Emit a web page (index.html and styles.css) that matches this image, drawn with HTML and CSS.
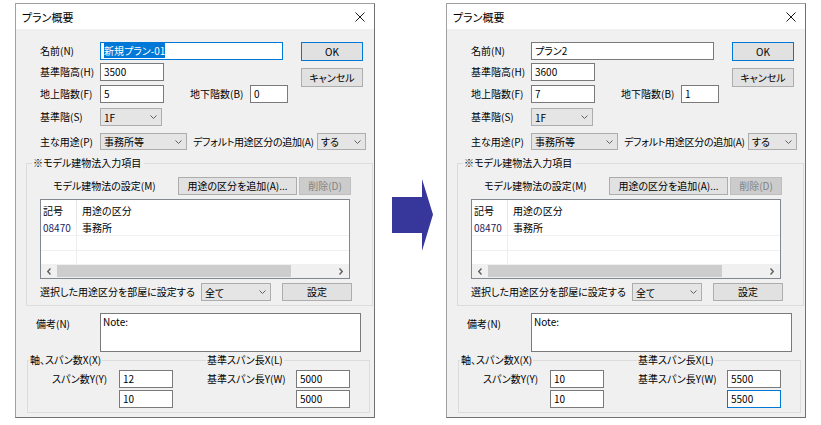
FILE: index.html
```html
<!DOCTYPE html>
<html lang="ja">
  <head>
    <meta charset="UTF-8" />
    <title>プラン概要</title>
    <link rel="stylesheet" href="styles.css">
  </head>
  <body>
    <div class="page">
      <!-- 変更前 -->
      <div class="dialog">
        <div class="titlebar">
          <span class="title">プラン概要</span>
          <svg class="close" width="10" height="10" viewBox="0 0 10 10"><path d="M0.5 0.5 L9.5 9.5 M9.5 0.5 L0.5 9.5" stroke="#1a1a1a" stroke-width="1" fill="none"/></svg>
        </div>
        <div class="body">
          <div class="top">
            <div class="form">
              <div class="row">
                <span class="label">名前(N)</span>
                <div class="field w-name focus"><span class="sel">新規プラン-01</span></div>
              </div>
              <div class="row">
                <span class="label">基準階高(H)</span>
                <div class="field w-num">3500</div>
              </div>
              <div class="row">
                <span class="label">地上階数(F)</span>
                <div class="field w-num">5</div>
                <span class="label label-b">地下階数(B)</span>
                <div class="field w-b">0</div>
              </div>
              <div class="row">
                <span class="label">基準階(S)</span>
                <div class="combo w-floor"><span>1F</span><svg class="chev" width="7" height="4" viewBox="0 0 7 4"><path d="M0.5 0.5 L3.5 3.5 L6.5 0.5" fill="none" stroke="#606060"/></svg></div>
              </div>
            </div>
            <div class="actions">
              <button type="button" class="btn default">OK</button>
              <button type="button" class="btn">キャンセル</button>
            </div>
          </div>

          <div class="row row-use">
            <span class="label">主な用途(P)</span>
            <div class="combo w-use"><span>事務所等</span><svg class="chev" width="7" height="4" viewBox="0 0 7 4"><path d="M0.5 0.5 L3.5 3.5 L6.5 0.5" fill="none" stroke="#606060"/></svg></div>
            <span class="label label-def">デフォルト用途区分の追加(A)</span>
            <div class="combo w-def"><span>する</span><svg class="chev" width="7" height="4" viewBox="0 0 7 4"><path d="M0.5 0.5 L3.5 3.5 L6.5 0.5" fill="none" stroke="#606060"/></svg></div>
          </div>

          <div class="group group-model">
            <div class="legend">※モデル建物法入力項目</div>
            <div class="model-row">
              <span class="label label-model">モデル建物法の設定(M)</span>
              <button type="button" class="btn btn-add">用途の区分を追加(A)...</button>
              <button type="button" class="btn btn-del" disabled>削除(D)</button>
            </div>
            <div class="list">
              <div class="list-head"><span class="c1">記号</span><span class="c2">用途の区分</span></div>
              <div class="list-row"><span class="c1 code">08470</span><span class="c2">事務所</span></div>
              <div class="list-row"><span class="c1"></span><span class="c2"></span></div>
              <div class="list-row last"><span class="c1"></span><span class="c2"></span></div>
              <div class="hscroll">
                <div class="sb-arrow"><svg width="4" height="7" viewBox="0 0 4 7"><path d="M3.5 0.5 L0.8 3.5 L3.5 6.5" fill="none" stroke="#606060" stroke-width="1.4"/></svg></div>
                <div class="sb-track"><div class="sb-thumb"></div></div>
                <div class="sb-arrow"><svg width="4" height="7" viewBox="0 0 4 7"><path d="M0.5 0.5 L3.2 3.5 L0.5 6.5" fill="none" stroke="#606060" stroke-width="1.4"/></svg></div>
              </div>
            </div>
            <div class="apply-row">
              <span class="label label-apply">選択した用途区分を部屋に設定する</span>
              <div class="combo w-all"><span>全て</span><svg class="chev" width="7" height="4" viewBox="0 0 7 4"><path d="M0.5 0.5 L3.5 3.5 L6.5 0.5" fill="none" stroke="#606060"/></svg></div>
              <button type="button" class="btn btn-set">設定</button>
            </div>
          </div>

          <div class="note-row">
            <span class="label label-note">備考(N)</span>
            <div class="note">Note:</div>
          </div>

          <div class="group group-span">
            <div class="span-head">
              <span class="tag tag-x">軸、スパン数X(X)</span>
              <span class="tag">基準スパン長X(L)</span>
            </div>
            <div class="span-grid">
              <span class="label g-l1">スパン数Y(Y)</span>
              <div class="field g-f1">12</div>
              <span class="label g-l2">基準スパン長Y(W)</span>
              <div class="field g-f2">5000</div>
              <div class="field g-f1">10</div>
              <div class="field g-f2">5000</div>
            </div>
          </div>
        </div>
      </div>

      <div class="gap">
        <svg class="arrow" width="43" height="73" viewBox="0 0 43 73"><polygon points="1,18 31,18 31,0 42,35.5 31,72 31,54 1,54" fill="#36369b"/></svg>
      </div>

      <!-- 変更後 -->
      <div class="dialog">
        <div class="titlebar">
          <span class="title">プラン概要</span>
          <svg class="close" width="10" height="10" viewBox="0 0 10 10"><path d="M0.5 0.5 L9.5 9.5 M9.5 0.5 L0.5 9.5" stroke="#1a1a1a" stroke-width="1" fill="none"/></svg>
        </div>
        <div class="body">
          <div class="top">
            <div class="form">
              <div class="row">
                <span class="label">名前(N)</span>
                <div class="field w-name">プラン2</div>
              </div>
              <div class="row">
                <span class="label">基準階高(H)</span>
                <div class="field w-num">3600</div>
              </div>
              <div class="row">
                <span class="label">地上階数(F)</span>
                <div class="field w-num">7</div>
                <span class="label label-b">地下階数(B)</span>
                <div class="field w-b">1</div>
              </div>
              <div class="row">
                <span class="label">基準階(S)</span>
                <div class="combo w-floor"><span>1F</span><svg class="chev" width="7" height="4" viewBox="0 0 7 4"><path d="M0.5 0.5 L3.5 3.5 L6.5 0.5" fill="none" stroke="#606060"/></svg></div>
              </div>
            </div>
            <div class="actions">
              <button type="button" class="btn default">OK</button>
              <button type="button" class="btn">キャンセル</button>
            </div>
          </div>

          <div class="row row-use">
            <span class="label">主な用途(P)</span>
            <div class="combo w-use"><span>事務所等</span><svg class="chev" width="7" height="4" viewBox="0 0 7 4"><path d="M0.5 0.5 L3.5 3.5 L6.5 0.5" fill="none" stroke="#606060"/></svg></div>
            <span class="label label-def">デフォルト用途区分の追加(A)</span>
            <div class="combo w-def"><span>する</span><svg class="chev" width="7" height="4" viewBox="0 0 7 4"><path d="M0.5 0.5 L3.5 3.5 L6.5 0.5" fill="none" stroke="#606060"/></svg></div>
          </div>

          <div class="group group-model">
            <div class="legend">※モデル建物法入力項目</div>
            <div class="model-row">
              <span class="label label-model">モデル建物法の設定(M)</span>
              <button type="button" class="btn btn-add">用途の区分を追加(A)...</button>
              <button type="button" class="btn btn-del" disabled>削除(D)</button>
            </div>
            <div class="list">
              <div class="list-head"><span class="c1">記号</span><span class="c2">用途の区分</span></div>
              <div class="list-row"><span class="c1 code">08470</span><span class="c2">事務所</span></div>
              <div class="list-row"><span class="c1"></span><span class="c2"></span></div>
              <div class="list-row last"><span class="c1"></span><span class="c2"></span></div>
              <div class="hscroll">
                <div class="sb-arrow"><svg width="4" height="7" viewBox="0 0 4 7"><path d="M3.5 0.5 L0.8 3.5 L3.5 6.5" fill="none" stroke="#606060" stroke-width="1.4"/></svg></div>
                <div class="sb-track"><div class="sb-thumb"></div></div>
                <div class="sb-arrow"><svg width="4" height="7" viewBox="0 0 4 7"><path d="M0.5 0.5 L3.2 3.5 L0.5 6.5" fill="none" stroke="#606060" stroke-width="1.4"/></svg></div>
              </div>
            </div>
            <div class="apply-row">
              <span class="label label-apply">選択した用途区分を部屋に設定する</span>
              <div class="combo w-all"><span>全て</span><svg class="chev" width="7" height="4" viewBox="0 0 7 4"><path d="M0.5 0.5 L3.5 3.5 L6.5 0.5" fill="none" stroke="#606060"/></svg></div>
              <button type="button" class="btn btn-set">設定</button>
            </div>
          </div>

          <div class="note-row">
            <span class="label label-note">備考(N)</span>
            <div class="note">Note:</div>
          </div>

          <div class="group group-span">
            <div class="span-head">
              <span class="tag tag-x">軸、スパン数X(X)</span>
              <span class="tag">基準スパン長X(L)</span>
            </div>
            <div class="span-grid">
              <span class="label g-l1">スパン数Y(Y)</span>
              <div class="field g-f1">10</div>
              <span class="label g-l2">基準スパン長Y(W)</span>
              <div class="field g-f2">5500</div>
              <div class="field g-f1">10</div>
              <div class="field g-f2 focus">5500</div>
            </div>
          </div>
        </div>
      </div>
    </div>
  </body>
</html>
```

FILE: styles.css
```css
body {
  margin: 0;
  background: #ffffff;
  font-family: "Noto Sans CJK JP", sans-serif;
  font-size: 10px;
  font-feature-settings: "palt";
  color: #000000;
}
.page {
  display: flex;
  align-items: flex-start;
  padding: 3px 0 0 15px;
}
.dialog {
  width: 360px;
  height: 415px;
  flex: none;
  box-sizing: border-box;
  border: 1px solid #a0a0a0;
  border-right-color: #707070;
  border-bottom-color: #707070;
  background: #f0f0f0;
}
.titlebar {
  height: 25px;
  background: #ffffff;
  display: flex;
  align-items: center;
  justify-content: space-between;
  padding: 0 9px 0 6px;
}
.title {
  font-size: 11px;
}
.close {
  display: block;
}
.body {
  padding: 13px 1px 0 10px;
}

/* 上部フォーム */
.top {
  display: flex;
  height: 91px;
  padding-left: 14px;
}
.form {
  width: 261px;
  display: grid;
  grid-template-rows: 21px 22px 23px 25px;
}
.row {
  display: flex;
  align-items: flex-start;
}
.label {
  flex: none;
  width: 60px;
  line-height: 18px;
  white-space: nowrap;
}
.field {
  flex: none;
  box-sizing: border-box;
  height: 18px;
  border: 1px solid #7a7a7a;
  background: #ffffff;
  padding-left: 3px;
  line-height: 16px;
  white-space: nowrap;
  overflow: hidden;
}
.field.focus {
  border-color: #0078d7;
}
.sel {
  background: #0078d7;
  color: #ffffff;
}
.w-name {
  width: 183px;
}
.w-num {
  width: 64px;
}
.w-b {
  width: 38px;
}
.label-b {
  margin-left: 26px;
}
.combo {
  flex: none;
  box-sizing: border-box;
  height: 18px;
  border: 1px solid #adadad;
  background: #e5e5e5;
  display: flex;
  align-items: center;
  justify-content: space-between;
  padding: 0 4px 0 3px;
  white-space: nowrap;
}
.chev {
  display: block;
}
.w-floor {
  width: 62px;
}
.w-use {
  width: 87px;
}
.w-def {
  width: 49px;
}
.w-all {
  width: 70px;
}

.btn {
  flex: none;
  box-sizing: border-box;
  height: 19px;
  margin: 0;
  padding: 0;
  border: 1px solid #adadad;
  border-radius: 0;
  background: #e1e1e1;
  color: #000000;
  font-family: inherit;
  font-size: inherit;
  font-feature-settings: inherit;
  line-height: 17px;
  text-align: center;
  white-space: nowrap;
}
.btn.default {
  border-color: #0078d7;
}
.btn:disabled {
  background: #cccccc;
  border-color: #bfbfbf;
  color: #838383;
}
.actions {
  display: flex;
  flex-direction: column;
  gap: 7px;
}
.actions .btn {
  width: 62px;
}

.row-use {
  height: 17px;
  padding-left: 14px;
}
.row-use .label {
  line-height: 17px;
}
.row-use .combo {
  height: 17px;
}
.label-def {
  width: 124px;
  margin-left: 6px;
  letter-spacing: -0.3px;
}

/* グループボックス */
.group {
  border: 1px solid #dcdcdc;
}
.group-model {
  margin-top: 13px;
  padding-bottom: 4px;
}
.legend {
  width: fit-content;
  height: 14px;
  margin: -8px 0 0 5px;
  padding: 0 3px 0 1px;
  background: #f0f0f0;
  line-height: 14px;
  white-space: nowrap;
}
.model-row {
  display: flex;
  margin-top: 7px;
  padding-left: 26px;
}
.label-model {
  width: 125px;
}
.model-row .btn {
  height: 18px;
  line-height: 16px;
}
.btn-add {
  width: 119px;
}
.btn-del {
  width: 52px;
  margin-left: 2px;
}

.list {
  box-sizing: border-box;
  width: 310px;
  height: 80px;
  margin: 4px 0 0 13px;
  border: 1px solid #828790;
  background: #ffffff;
}
.list-head,
.list-row {
  display: flex;
}
.list-head {
  height: 21px;
  line-height: 21px;
}
.list-row {
  height: 14px;
  line-height: 14px;
  border-bottom: 1px solid #f0f0f0;
}
.list-row.last {
  height: 13px;
  border-bottom: none;
}
.c1 {
  box-sizing: border-box;
  width: 36px;
  padding-left: 2px;
  border-right: 1px solid #ededed;
}
.list-head .c1 {
  border-right-color: #e5e5e5;
}
.c2 {
  padding-left: 5px;
}
.code {
  color: #1c1c5a;
}
.hscroll {
  display: flex;
  height: 14px;
  background: #f0f0f0;
}
.sb-arrow {
  width: 16px;
  display: flex;
  align-items: center;
  justify-content: center;
}
.sb-track {
  flex: 1;
  display: flex;
  padding: 1px 0;
}
.sb-thumb {
  width: 234px;
  background: #cdcdcd;
}

.apply-row {
  display: flex;
  margin-top: 4px;
  padding-left: 13px;
}
.label-apply {
  width: 161px;
}
.btn-set {
  width: 70px;
  height: 18px;
  margin-left: 11px;
  line-height: 16px;
}

.note-row {
  display: flex;
  margin-top: 7px;
  padding-left: 10px;
}
.label-note {
  width: 64px;
  padding-top: 2px;
}
.note {
  box-sizing: border-box;
  width: 261px;
  height: 39px;
  border: 1px solid #7a7a7a;
  background: #ffffff;
  padding: 1px 2px;
  line-height: 14px;
}

.group-span {
  margin: 8px 3px 0 1px;
  padding-bottom: 4px;
}
.span-head {
  display: grid;
  grid-template-columns: 178px auto;
  height: 14px;
  margin-top: -8px;
}
.tag {
  justify-self: start;
  padding: 0 1px;
  background: #f0f0f0;
  line-height: 14px;
  white-space: nowrap;
}
.tag-x {
  margin-left: 1px;
}
.span-grid {
  display: grid;
  grid-template-columns: 67px 54px 34px 89px 54px;
  grid-template-rows: 18px 18px;
  row-gap: 2px;
  margin-top: 3px;
  padding-left: 24px;
}
.g-l1 {
  grid-column: 1;
}
.g-f1 {
  grid-column: 2;
}
.g-l2 {
  grid-column: 4;
}
.g-f2 {
  grid-column: 5;
}

.gap {
  flex: none;
  width: 71px;
}
.arrow {
  display: block;
  margin: 176px 0 0 16px;
}
```
